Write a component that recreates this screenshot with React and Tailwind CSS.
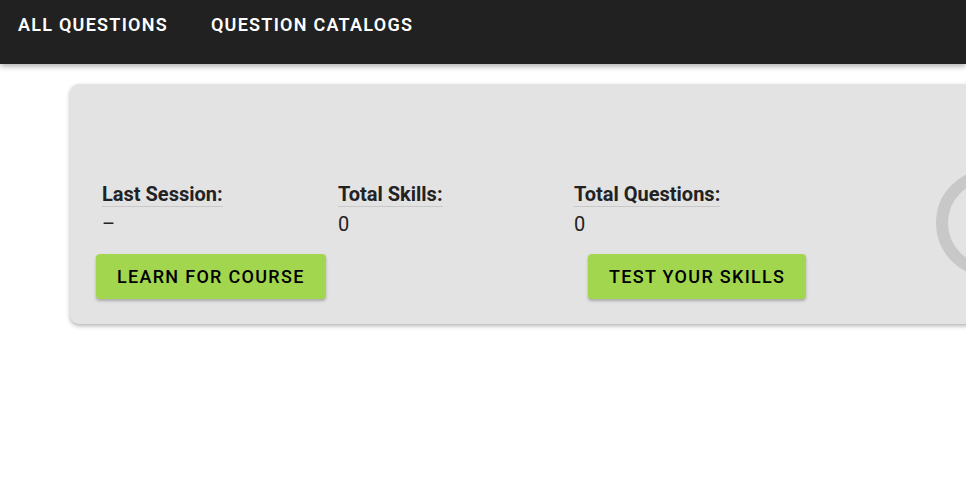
import React from 'react';

const stats = [
  { label: 'Last Session:', value: '–' },
  { label: 'Total Skills:', value: '0' },
  { label: 'Total Questions:', value: '0' },
];

const NavBar = () => {
  return (
    <header className="h-16 bg-[#212121] shadow-[0_2px_6px_rgba(0,0,0,0.35)] relative z-10">
      <nav className="flex pl-[18px] pt-[13px] gap-[43px]">
        <a className="text-white text-lg font-semibold tracking-[1.25px] leading-6 uppercase">All Questions</a>
        <a className="text-white text-lg font-semibold tracking-[1.25px] leading-6 uppercase">Question Catalogs</a>
      </nav>
    </header>
  );
};

const ProgressRing = () => {
  return (
    <svg width="108" height="108" viewBox="0 0 108 108" className="shrink-0 mt-[85px]">
      <circle cx="54" cy="54" r="48" fill="none" stroke="#c8c8c8" strokeWidth="12" />
    </svg>
  );
};

export default function App() {
  return (
    <div className="w-full min-h-screen bg-white overflow-hidden font-['Roboto',sans-serif] text-[#222]">
      <NavBar />
      <main className="pt-5 pl-[70px]">
        <div className="w-[1100px] h-60 bg-[#e3e3e3] rounded-[9px] shadow-[0_2px_4px_rgba(0,0,0,0.3)] flex">
          <div className="w-[866px] shrink-0 pt-[98px]">
            <div className="flex pl-8">
              {stats.map((s) => (
                <div key={s.label} className="w-[236px] flex flex-col items-start">
                  <span className="text-xl font-bold leading-6 border-b border-[#c9c9c9]">{s.label}</span>
                  <span className="text-xl leading-6 mt-[5px]">{s.value}</span>
                </div>
              ))}
            </div>
            <div className="flex pl-[26px] mt-[18px]">
              <div className="w-[492px]">
                <button className="h-[45px] px-[21px] bg-[#a2d64f] rounded text-black text-lg font-medium tracking-[1.3px] uppercase shadow-[0_2px_3px_rgba(0,0,0,0.25)]">
                  Learn for course
                </button>
              </div>
              <button className="h-[45px] px-[21px] bg-[#a2d64f] rounded text-black text-lg font-medium tracking-[1.3px] uppercase shadow-[0_2px_3px_rgba(0,0,0,0.25)]">
                Test your skills
              </button>
            </div>
          </div>
          <ProgressRing />
        </div>
      </main>
    </div>
  );
}
